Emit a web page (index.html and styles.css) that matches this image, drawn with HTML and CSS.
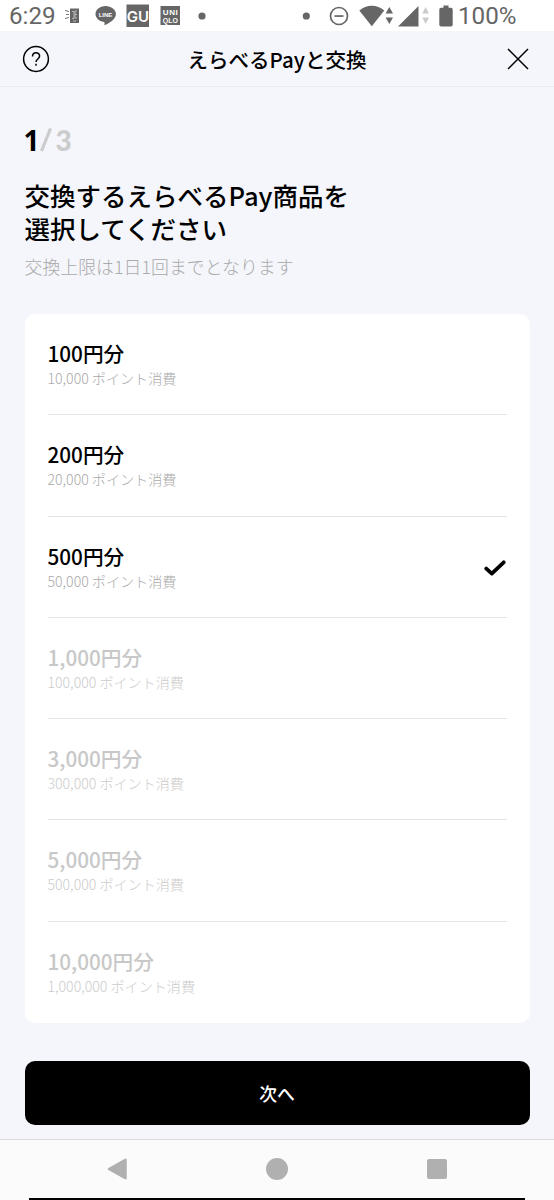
FILE: index.html
```html
<!DOCTYPE html>
<html lang="ja">
<head>
<meta charset="utf-8">
<title>えらべるPayと交換</title>
<link rel="stylesheet" href="styles.css">
</head>
<body>
<div class="statusbar">
  <span class="clock">6:29</span>
  <svg class="status-icons" width="430" height="30" viewBox="60 0 430 30" fill="#666">
    <path d="M70 8.500h9v14.500h-9z"/>
    <path d="M65 10.500l4 1M66 14.500h3M65 18.500l4-1" stroke="#777" fill="none"/>
    <path d="M72 11.500h2v7h-2M77 11h-2v7h2M75 14.500h2M73 21h3" stroke="#ccc" stroke-width=".8" fill="none"/>
    <path d="M105.500 6C99.700 6 95.500 9.700 95.500 14c0 4 3.500 7.300 8.300 8 .8.200.9.900.6 3.300 4.500-2 11.500-6 11.500-11.300 0-4.300-4.600-8-10.400-8z"/>
    <text x="105.500" y="17" class="line-label">LINE</text>
    <path d="M126.500 4.500h22.500V27h-22.500z"/>
    <text x="137.800" y="21.500" class="gu-label">GU</text>
    <path d="M160.500 6h19.500v19h-19.500z"/>
    <text x="170.300" y="14.500" class="uniqlo-label" textLength="15">UNI</text>
    <text x="170.300" y="22.500" class="uniqlo-label" textLength="15" lengthAdjust="spacingAndGlyphs">QLO</text>
    <circle cx="202" cy="16" r="3.600"/>
    <circle cx="306.300" cy="16" r="3.600"/>
    <circle cx="339" cy="16" r="8.500" fill="none" stroke="#666" stroke-width="1.700"/>
    <path d="M334.500 15.200h9v1.700h-9z"/>
    <path d="M371.800 26.300L359.300 10.600q5.500-4.800 12.500-4.800t12.500 4.800z"/>
    <path d="M389.300 7l3.700 6.500h-7.400zM389.300 24l3.700-6.500h-7.400z"/>
    <path d="M418.500 6v20.500h-20.500z"/>
    <path d="M425.600 7l3.400 6.500h-6.800zM425.600 24l3.400-6.500h-6.800z" fill="#ccc"/>
    <path d="M443.500 5.500h5v2.300h2.500q1.700 0 1.700 1.700v15.200q0 1.800-1.700 1.800h-10q-1.700 0-1.700-1.800V9.500q0-1.700 1.700-1.700h2.500z"/>
  </svg>
  <span class="battery">100%</span>
</div>
<header class="header">
  <svg width="28" height="28" viewBox="0 0 28 28" fill="none" stroke="#000" stroke-width="1.500">
    <circle cx="14" cy="14" r="12.400"/>
    <path d="M10.500 11.500c0-4.900 7.100-4.700 7.100-.4 0 2.900-3.600 2.900-3.600 6"/>
    <path d="M14 18.800v2"/>
  </svg>
  <h1 class="header-title">えらべるPayと交換</h1>
  <svg width="22" height="22" viewBox="0 0 22 22" fill="none" stroke="#000" stroke-width="1.500"><path d="M1 1l20 20M21 1L1 21"/></svg>
</header>
<main class="main">
  <div class="step"><span class="step-now">1</span><svg class="step-slash" width="14" height="30" viewBox="0 0 14 30"><path d="M2.500 26L11.500 3.500" stroke="#ccc" stroke-width="3.200"/></svg><span>3</span></div>
  <h2 class="title">交換するえらべるPay商品を<br>選択してください</h2>
  <p class="note">交換上限は1日1回までとなります</p>
  <ul class="options">
    <li class="option"><div><div class="amount">100円分</div><div class="cost">10,000 ポイント消費</div></div></li>
    <li class="option"><div><div class="amount">200円分</div><div class="cost">20,000 ポイント消費</div></div></li>
    <li class="option"><div><div class="amount">500円分</div><div class="cost">50,000 ポイント消費</div></div>
      <svg class="check" width="22" height="16" viewBox="0 0 22 16" fill="none" stroke="#000" stroke-width="3.800" stroke-linecap="round" stroke-linejoin="round"><path d="M2.300 8.600l5.500 5L19.700 2.300"/></svg></li>
    <li class="option disabled"><div><div class="amount">1,000円分</div><div class="cost">100,000 ポイント消費</div></div></li>
    <li class="option disabled"><div><div class="amount">3,000円分</div><div class="cost">300,000 ポイント消費</div></div></li>
    <li class="option disabled"><div><div class="amount">5,000円分</div><div class="cost">500,000 ポイント消費</div></div></li>
    <li class="option disabled"><div><div class="amount">10,000円分</div><div class="cost">1,000,000 ポイント消費</div></div></li>
  </ul>
  <button class="next">次へ</button>
</main>
<nav class="navbar">
  <svg width="22" height="24" viewBox="0 0 22 24"><path d="M3 12L19.500 2.800v18.400z" fill="#b0b0b0" stroke="#b0b0b0" stroke-width="2.500" stroke-linejoin="round"/></svg>
  <span class="home"></span>
  <span class="recent"></span>
</nav>
<div class="edge"></div>
</body>
</html>
```

FILE: styles.css
```css
* { box-sizing: border-box; }
body {
  margin: 0;
  height: 1200px;
  display: flex;
  flex-direction: column;
  overflow: hidden;
  background: #f5f6fb;
  color: #000;
  font-family: "Noto Sans CJK JP", sans-serif;
}
.statusbar {
  height: 31px;
  display: flex;
  background: #fff;
  color: #666;
  font: 24.200px/33px Roboto, sans-serif;
}
.clock { width: 60px; padding-left: 9px; }
.battery { margin-left: -32px; }
.status-icons text { fill: #fff; text-anchor: middle; font-family: "Liberation Sans", sans-serif; font-weight: 700; }
.status-icons .line-label { font-size: 6px; }
.status-icons .gu-label { font-size: 15px; font-family: Inter, sans-serif; font-weight: 600; }
.status-icons .uniqlo-label { font-size: 8px; }
.header {
  height: 56px;
  display: flex;
  align-items: center;
  justify-content: space-between;
  padding: 0 25px 0 22px;
  border-bottom: 1px solid #e9eaef;
}
.header-title { margin: 1px 3px 0 0; font-size: 20.500px; font-weight: 500; line-height: 30px; }
.main { height: 1052px; padding: 38px 24.500px 0; }
.step { display: flex; height: 30px; font: 900 28px/30px Lato, sans-serif; color: #ccc; }
.step-now { width: 15px; margin-left: -1px; color: #000; font-family: "Open Sans", sans-serif; font-weight: 700; }
.step-slash { margin-right: 3px; }
.title { margin: 23px 0 0; font-size: 25.500px; line-height: 33px; font-weight: 500; }
.note { margin: 9px 0 0; font-size: 17.900px; line-height: 27px; font-weight: 300; color: #aaa; }
.options {
  list-style: none;
  margin: 34px 0 0;
  padding: 0 23px;
  height: 708.500px;
  background: #fff;
  border-radius: 10px;
}
.option {
  height: 101.250px;
  display: flex;
  align-items: center;
  justify-content: space-between;
  border-bottom: 1px solid #e5e5e5;
}
.option:last-child { border: 0; }
.check { margin: 2px 1px 0 0; }
.amount { font-size: 20.700px; font-weight: 500; line-height: 28px; }
.cost { font-size: 14.100px; font-weight: 300; line-height: 22px; color: #aaa; }
.disabled .amount { color: #c8c8c8; }
.disabled .cost { color: #ccc; }
.next {
  display: block;
  width: 100%;
  height: 64px;
  margin-top: 38.500px;
  padding: 0;
  border: 0;
  border-radius: 10px;
  background: #000;
  color: #fff;
  font: 500 17.800px/64px "Noto Sans CJK JP", sans-serif;
}
.navbar {
  height: 59px;
  display: grid;
  grid-template-columns: repeat(3, 160px);
  justify-content: center;
  align-items: center;
  justify-items: center;
  background: #fbfbfb;
  border-top: 1px solid #dcdcdf;
}
.home { width: 22px; height: 22px; border-radius: 50%; background: #b0b0b0; }
.recent { width: 20px; height: 20px; border-radius: 2px; background: #b0b0b0; }
.edge { height: 2px; background: linear-gradient(#000, #000) 29px 0 / 496px 2px no-repeat #fbfbfb; }
```
